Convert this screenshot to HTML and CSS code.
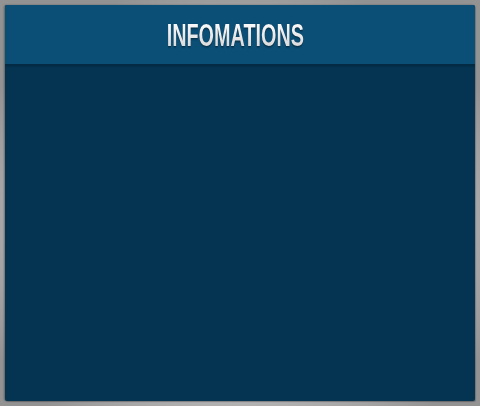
FILE: index.html
```html
<!DOCTYPE html>
<html>
<head>
<meta charset="utf-8">
<link rel="stylesheet" href="styles.css">
</head>
<body>
<div class="panel">
  <div class="panel-header"><h1 class="title">INFOMATIONS</h1></div>
  <div class="panel-body"></div>
</div>
</body>
</html>
```
FILE: styles.css
```css
html, body {
  margin: 0;
  padding: 0;
  height: 100%;
}
body {
  background: radial-gradient(ellipse 60% 60% at 50% 55%, #e2e2e2 0%, #c8c8c8 55%, #939393 100%);
  padding: 5px;
  box-sizing: border-box;
  width: 480px;
  height: 406px;
}
.panel {
  display: flex;
  flex-direction: column;
  width: 470px;
  height: 396px;
  background: #053352;
  box-shadow: -1px 0 2px rgba(0,0,0,0.35), 1px 1px 1px rgba(0,0,0,0.2);
  border-radius: 2px;
  overflow: hidden;
}
.panel-header {
  height: 59px;
  background: #0b4e76;
  border-bottom: 1px solid #042b45;
  box-shadow: 0 1px 2px rgba(0,0,0,0.25);
  display: flex;
  align-items: center;
  justify-content: center;
  padding-right: 10px;
  position: relative;
}
.title {
  margin: 0;
  font-family: "Liberation Sans", Arial, sans-serif;
  font-weight: bold;
  font-size: 31px;
  line-height: 1;
  color: #f2f2f2;
  background: linear-gradient(#ffffff, #d4d4d4);
  -webkit-background-clip: text;
  background-clip: text;
  -webkit-text-fill-color: transparent;
  filter: drop-shadow(0 1px 1px rgba(0,0,0,0.5));
  transform: scaleX(0.64);
  margin-top: 2px;
}
.panel-body {
  flex: 1;
}
```
